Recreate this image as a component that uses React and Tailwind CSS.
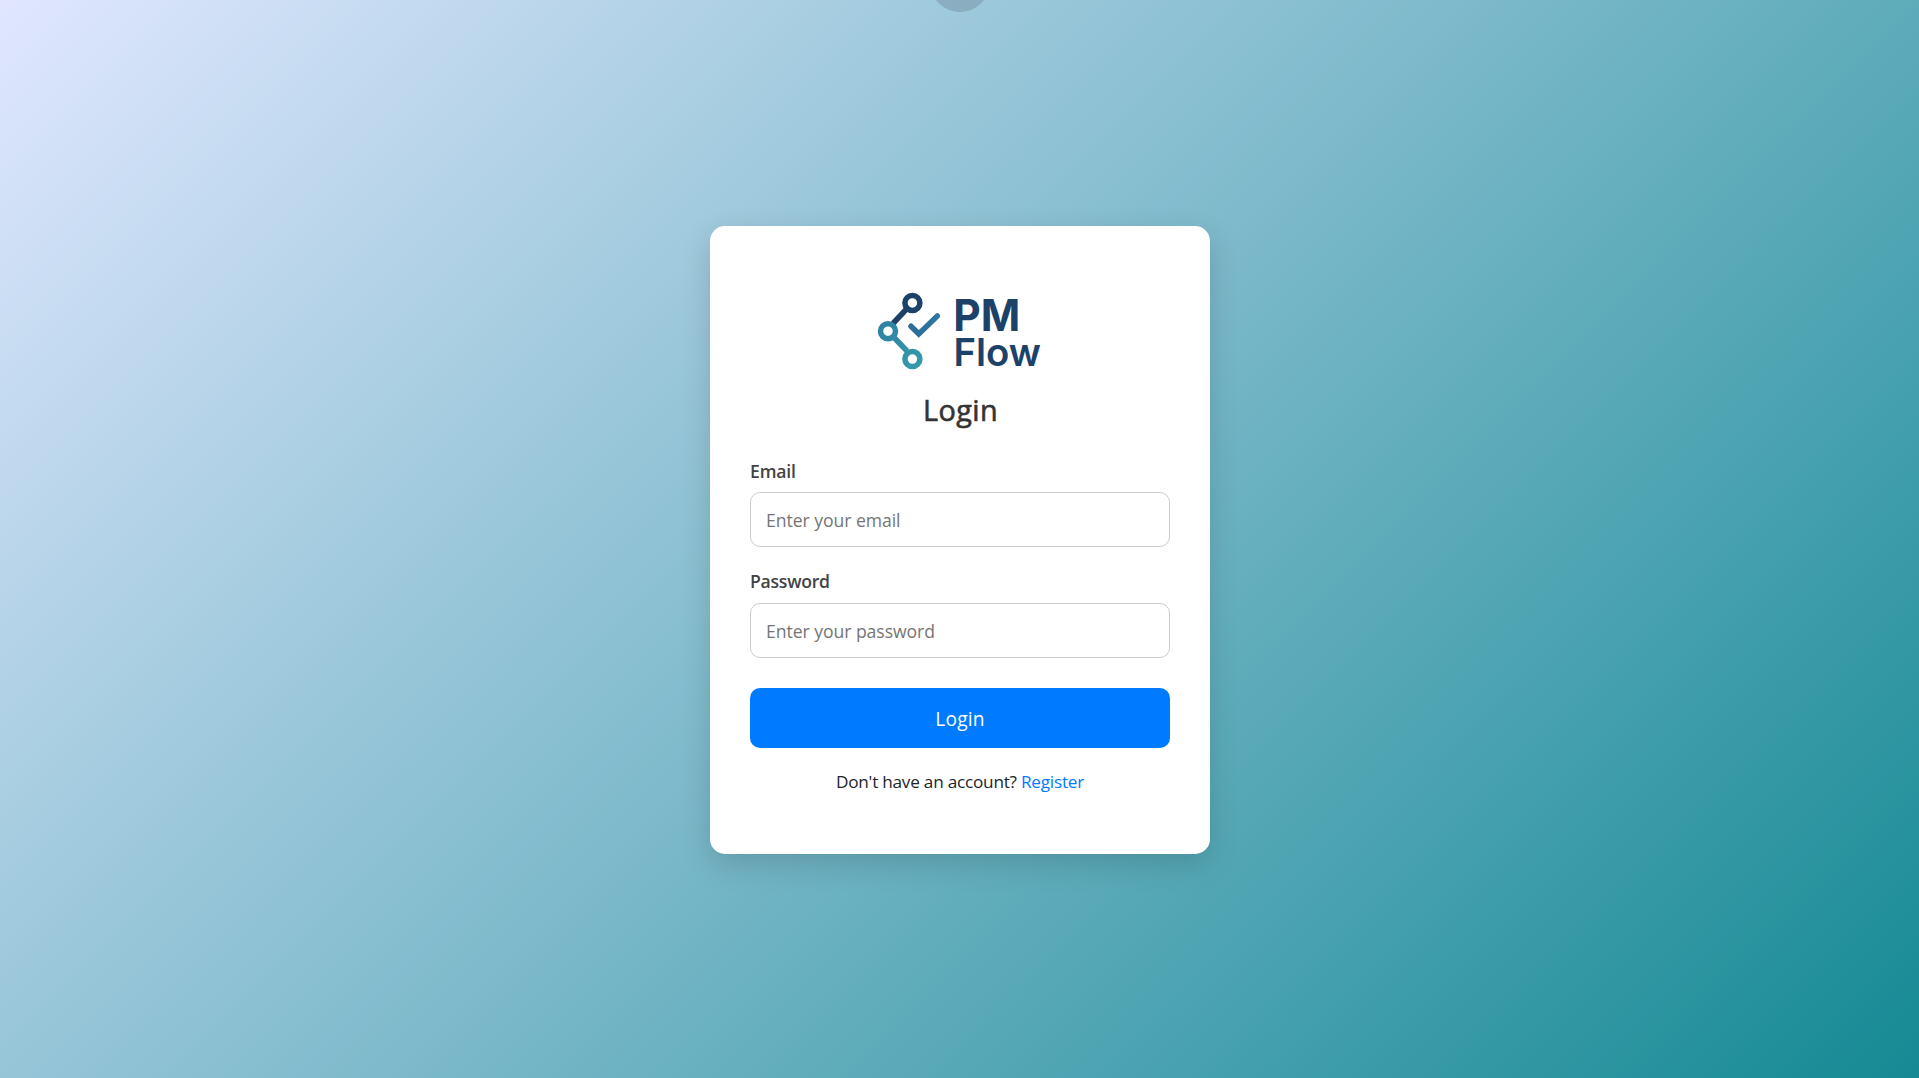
function Logo() {
  return (
    <svg width="200" height="100" viewBox="0 0 200 100" role="img" aria-label="PM Flow" className="shrink-0">
      <defs>
        <linearGradient id="flow" gradientUnits="userSpaceOnUse" x1="20" y1="42" x2="60" y2="88">
          <stop offset="0" stopColor="#2f80a3" />
          <stop offset="1" stopColor="#339cad" />
        </linearGradient>
        <linearGradient id="tick" gradientUnits="userSpaceOnUse" x1="50" y1="52" x2="78" y2="36">
          <stop offset="0" stopColor="#2a6c98" />
          <stop offset="1" stopColor="#2f78a0" />
        </linearGradient>
      </defs>
      <g fill="none" strokeWidth="5.5">
        <path d="M47 28.5 33 43.5" stroke="#1c4269" />
        <circle cx="52.4" cy="22.9" r="7.5" stroke="#1c4269" />
        <g stroke="url(#flow)">
          <circle cx="28" cy="51.2" r="7.5" />
          <path d="M33.5 57 47 71" />
          <circle cx="52.4" cy="79.1" r="7.5" />
        </g>
        <path d="M51 46.2 58.8 54 77.3 36" stroke="url(#tick)" strokeLinecap="round" />
      </g>
      <g fill="#1c4269" fontFamily="Inter">
        <text x="93.3" y="50.8" fontSize="44.5" fontWeight="700" textLength="67" lengthAdjust="spacingAndGlyphs">PM</text>
        <text x="93.4" y="86" fontSize="38.5" fontWeight="600" textLength="87.5" lengthAdjust="spacingAndGlyphs">Flow</text>
      </g>
    </svg>
  );
}

function Field({ id, label, type, placeholder, labelClass }) {
  return (
    <div className="flex flex-col">
      <label htmlFor={id} className={`self-start text-[17.6px] leading-[26px] font-semibold text-[#444] ${labelClass}`}>
        {label}
      </label>
      <input
        id={id}
        type={type}
        placeholder={placeholder}
        className="h-[55px] w-full rounded-[10px] border border-[#ccc] bg-white px-[15px] text-[17.6px] tracking-[-0.05px] text-[#333] outline-none placeholder:text-[#757575]"
      />
    </div>
  );
}

export default function App() {
  return (
    <main className="relative flex h-screen w-full items-center justify-center overflow-hidden bg-[linear-gradient(135deg,#e0e7ff_0%,#158a94_100%)] pt-[2px] pl-px font-['Open_Sans','Noto_Sans',sans-serif]">
      <div className="absolute -top-[48px] left-1/2 size-[60px] -translate-x-1/2 rounded-full bg-[#333344]/18" />
      <section className="flex h-[628px] w-[500px] flex-col rounded-[15px] bg-white px-10 pt-[54px] shadow-[0_10px_30px_rgba(0,0,0,0.15)]">
        <div className="flex justify-center">
          <Logo />
        </div>
        <h1 className="mt-[11px] pl-px text-center text-[28.8px] leading-[38px] tracking-[0.4px] text-[#333] [-webkit-text-stroke:0.6px_#333]">Login</h1>
        <form className="mt-[29px] flex flex-col" onSubmit={(e) => e.preventDefault()}>
          <Field id="email" label="Email" type="email" placeholder="Enter your email" labelClass="mb-2 tracking-[-0.15px]" />
          <div className="h-[21px]" />
          <Field id="password" label="Password" type="password" placeholder="Enter your password" labelClass="mb-[9px] tracking-[-0.25px]" />
          <button type="submit" className="mt-[30px] h-[60px] rounded-[10px] bg-[#007bff] pt-[2px] text-[19.2px] tracking-[0.15px] text-white">
            Login
          </button>
        </form>
        <p className="mt-[21px] text-center text-[17.2px] leading-[26px] tracking-[-0.24px] text-[#212529]">
          Don't have an account? <a href="#register" className="text-[#007bff]">Register</a>
        </p>
      </section>
    </main>
  );
}
